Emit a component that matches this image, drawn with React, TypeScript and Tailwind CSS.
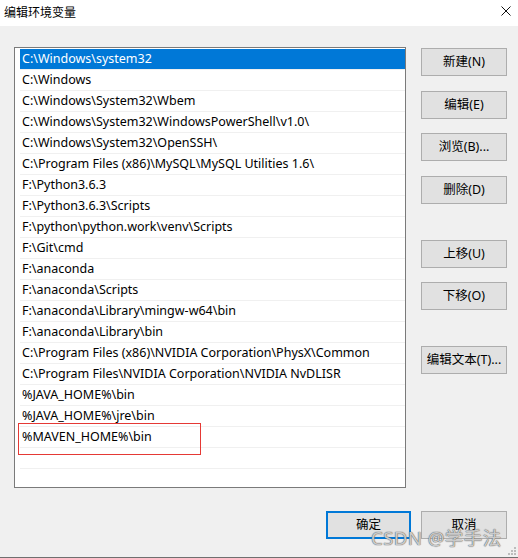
import React from "react"

const paths = [
  "C:\\Windows\\system32",
  "C:\\Windows",
  "C:\\Windows\\System32\\Wbem",
  "C:\\Windows\\System32\\WindowsPowerShell\\v1.0\\",
  "C:\\Windows\\System32\\OpenSSH\\",
  "C:\\Program Files (x86)\\MySQL\\MySQL Utilities 1.6\\",
  "F:\\Python3.6.3",
  "F:\\Python3.6.3\\Scripts",
  "F:\\python\\python.work\\venv\\Scripts",
  "F:\\Git\\cmd",
  "F:\\anaconda",
  "F:\\anaconda\\Scripts",
  "F:\\anaconda\\Library\\mingw-w64\\bin",
  "F:\\anaconda\\Library\\bin",
  "C:\\Program Files (x86)\\NVIDIA Corporation\\PhysX\\Common",
  "C:\\Program Files\\NVIDIA Corporation\\NVIDIA NvDLISR",
  "%JAVA_HOME%\\bin",
  "%JAVA_HOME%\\jre\\bin",
  "%MAVEN_HOME%\\bin",
  "",
  "",
]

const WinButton = ({ label, className = "" }: { label: string; className?: string }) => (
  <div
    className={`flex h-[28px] w-[86px] items-center justify-center border border-[#adadad] bg-[#e1e1e1] text-[12.5px] text-black ${className}`}
  >
    {label}
  </div>
)

const App = () => {
  return (
    <div className="relative flex h-[558px] w-[518px] flex-col overflow-hidden border-b border-[#6f6f6f] bg-[#f0f0f0] font-['Noto_Sans','Noto_Sans_CJK_SC',sans-serif] text-[12px] text-black">
      {/* Title bar */}
      <div className="flex h-[26px] shrink-0 items-center justify-between bg-white pl-[4px] pr-[7px]">
        <span className="text-[12px] leading-none">编辑环境变量</span>
        <svg width="10" height="10" viewBox="0 0 10 10" className="mb-[4px]">
          <path d="M0.5 0.5 L9.5 9.5 M9.5 0.5 L0.5 9.5" stroke="#111" strokeWidth="1" />
        </svg>
      </div>

      {/* List + side buttons */}
      <div className="flex pl-[14px] pt-[21px]">
        <div className="relative h-[441px] w-[392px] overflow-hidden border border-[#7a7a7a] bg-white pl-[5px] pt-[1px] text-[12.5px]">
          {paths.map((p, i) => (
            <div
              key={i}
              className={`flex h-[21px] items-center border-b border-[#f0f0f0] pl-[2px] pt-[1px] whitespace-nowrap ${
                i === 0 ? "bg-[#0078d7] text-white" : "text-black"
              }`}
            >
              {p}
            </div>
          ))}
          {/* red annotation */}
          <div className="absolute left-[3px] top-[375px] h-[32px] w-[183px] border border-[#e53935]" />
        </div>

        <div className="ml-[15px] flex flex-col pt-[1px]">
          <WinButton label="新建(N)" />
          <WinButton label="编辑(E)" className="mt-[15px]" />
          <WinButton label="浏览(B)..." className="mt-[14px]" />
          <WinButton label="删除(D)" className="mt-[15px]" />
          <WinButton label="上移(U)" className="mt-[36px]" />
          <WinButton label="下移(O)" className="mt-[14px]" />
          <WinButton label="编辑文本(T)..." className="mt-[36px]" />
        </div>
      </div>

      {/* Bottom buttons */}
      <div className="mt-[23px] flex justify-end gap-[10px] pr-[11px]">
        <div className="flex h-[28px] w-[85px] items-center justify-center border-2 border-[#0078d7] bg-[#e1e1e1] text-[12.5px]">
          确定
        </div>
        <WinButton label="取消" />
      </div>

      {/* watermark */}
      <div className="pointer-events-none absolute left-[371px] top-[529px] text-[18.5px] leading-none tracking-[0.5px] text-white/70 [text-shadow:0_0_1px_#555,0_0_1px_#555]">
        CSDN @学手法
      </div>

      {/* resize grip */}
      <svg width="8" height="8" viewBox="0 0 8 8" className="absolute bottom-[2px] right-[2px]">
        <rect x="6" y="0" width="2" height="2" fill="#bcbcbc" />
        <rect x="3" y="3" width="2" height="2" fill="#bcbcbc" />
        <rect x="6" y="3" width="2" height="2" fill="#bcbcbc" />
        <rect x="0" y="6" width="2" height="2" fill="#bcbcbc" />
        <rect x="3" y="6" width="2" height="2" fill="#bcbcbc" />
        <rect x="6" y="6" width="2" height="2" fill="#bcbcbc" />
      </svg>
    </div>
  )
}

export default App
